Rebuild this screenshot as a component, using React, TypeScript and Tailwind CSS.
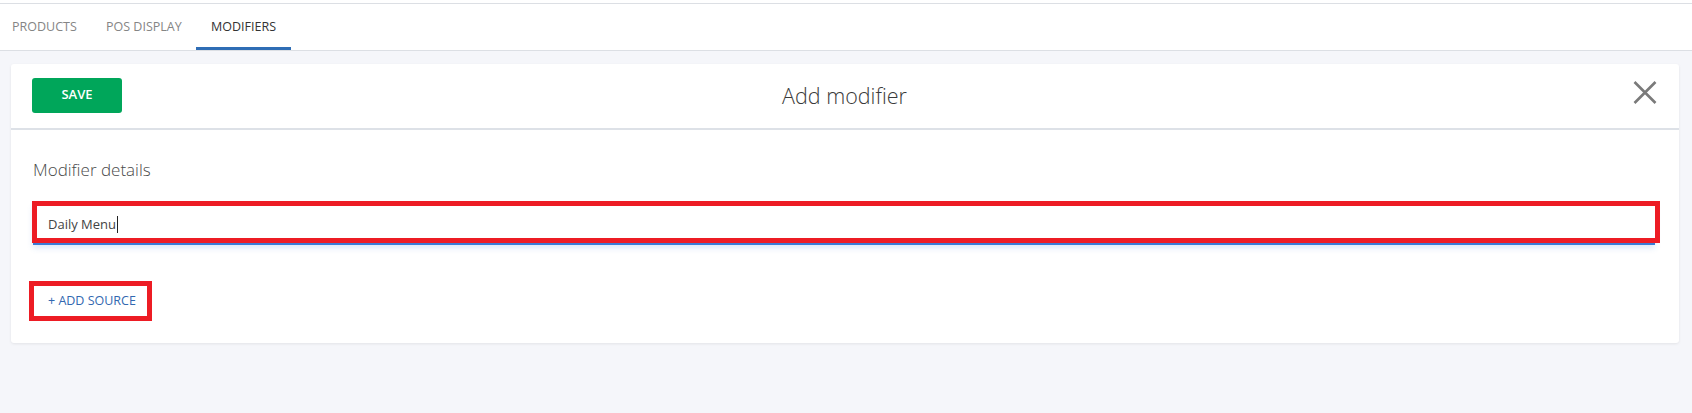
import React from 'react';

const tabs = [
    { label: 'PRODUCTS', cls: 'w-[95px] pl-[12px]' },
    { label: 'POS DISPLAY', cls: 'w-[101px] pl-[11px]' },
    { label: 'MODIFIERS', cls: 'w-[95px] pl-[15px]' },
];

export default function App() {
    const active = 'MODIFIERS';

    return (
        <div
            className="min-h-[413px] w-full bg-[#f5f6fa]"
            style={{ fontFamily: '"Open Sans", "Noto Sans", sans-serif' }}
        >
            {/* tab strip */}
            <div className="bg-white pt-[3px]">
                <div className="border-t border-[#dcdfe4]">
                    <div className="flex h-[47px] border-b border-[#dcdfe4]">
                        {tabs.map((tab) => (
                            <div
                                key={tab.label}
                                className={`flex h-full items-center text-[12.5px] ${tab.cls} ${
                                    tab.label === active
                                        ? 'border-b-[3px] border-[#2f6db5] pt-[3px] text-[#333]'
                                        : 'text-[#858585]'
                                }`}
                            >
                                {tab.label}
                            </div>
                        ))}
                    </div>
                </div>
            </div>

            {/* card */}
            <div className="ml-[11px] mr-[13px] mt-[13px] rounded-[3px] bg-white shadow-[0_1px_3px_rgba(0,0,0,0.08)]">
                <div className="grid h-[66px] grid-cols-[1fr_auto_1fr] items-center border-b-2 border-[#dde1e7] pl-[21px] pr-[22px]">
                    <div>
                        <button className="mb-[2px] h-[35px] w-[90px] rounded-[3px] bg-[#00a65a] text-[13px] font-semibold text-white">
                            SAVE
                        </button>
                    </div>
                    <div className="text-[21.5px] font-light text-[#3a3a3a]">Add modifier</div>
                    <div className="flex justify-end pb-[7px]">
                        <svg width="24" height="23" viewBox="0 0 24 23" fill="none" stroke="#7a7a7a" strokeWidth="2.6">
                            <path d="M1.5 1 L22.5 22 M22.5 1 L1.5 22" />
                        </svg>
                    </div>
                </div>

                <div className="px-[22px] pb-[22px] pt-[28px]">
                    <div className="text-[17px] leading-[24px] font-light text-[#4a4a4a]">Modifier details</div>

                    <div className="relative mr-[2px] mt-[22px] h-[41px] border-b-2 border-[#3a7bd5] bg-white shadow-[0_3px_6px_rgba(58,123,213,0.18)]">
                        <div className="flex h-full items-center pl-[15px] pt-[2px] text-[13px] text-[#444]">
                            Daily Menu
                            <span className="ml-[1px] inline-block h-[17px] w-px bg-[#222]" />
                        </div>
                        <div className="pointer-events-none absolute bottom-0 left-[-1px] right-[-5px] top-[-3px] border-[5px] border-[#ed1c24]" />
                    </div>

                    <div className="ml-[-4px] mt-[36px] flex h-[40px] w-[123px] items-center border-[5px] border-[#ed1c24] pl-[14px] text-[12.5px] text-[#3268b0]">
                        + ADD SOURCE
                    </div>
                </div>
            </div>
        </div>
    );
}
